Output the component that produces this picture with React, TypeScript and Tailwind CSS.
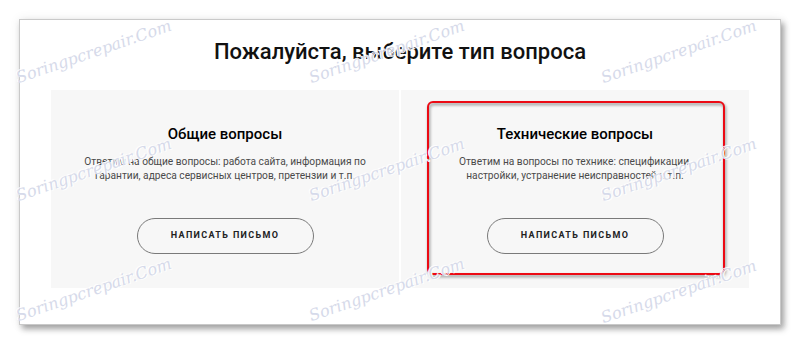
const marks = [
  { left: 20, top: 68 },
  { left: 313, top: 68 },
  { left: 605, top: 68 },
  { left: 20, top: 186 },
  { left: 313, top: 186 },
  { left: 605, top: 186 },
  { left: 20, top: 306 },
  { left: 313, top: 306 },
  { left: 605, top: 308 },
]

const cards = [
  {
    title: 'Общие вопросы',
    text: ['Ответим на общие вопросы: работа сайта, информация по', 'гарантии, адреса сервисных центров, претензии и т.п.'],
    marked: false,
  },
  {
    title: 'Технические вопросы',
    text: ['Ответим на вопросы по технике: спецификации,', 'настройки, устранение неисправностей и т.п.'],
    marked: true,
  },
]

function Card({ title, text, marked }: { title: string; text: string[]; marked: boolean }) {
  return (
    <div className="relative flex flex-col items-center bg-[#f7f7f7] pt-[34px] pb-[34px]">
      <h2 className="text-[15px] leading-[20px] font-medium text-black">{title}</h2>
      <p className="mt-[11px] text-center text-[10.2px] leading-[14px] text-[#4a4a4a]">
        {text[0]}
        <br />
        {text[1]}
      </p>
      <button className="mt-[35px] h-[36px] w-[177px] rounded-full border border-[#7a7a7a] text-[9px] font-bold tracking-[0.15em] text-[#222]">
        НАПИСАТЬ ПИСЬМО
      </button>
      {marked && (
        <div className="absolute left-[26px] top-[11px] h-[174px] w-[298px] rounded-[6px] border-2 border-[#ec0a14] drop-shadow-[1px_2px_1.5px_rgba(0,0,0,0.45)]" />
      )}
    </div>
  )
}

export default function App() {
  return (
    <div className="relative h-[344px] w-[800px] overflow-hidden bg-white font-['Roboto',sans-serif]">
      <div className="ml-[19px] mt-[19px] h-[306px] w-[762px] border border-[#c9c9c9] bg-white shadow-[3px_4px_6px_rgba(0,0,0,0.35),0_0_10px_rgba(0,0,0,0.08)]">
        <h1 className="pt-[17px] text-center text-[22px] leading-[30px] font-medium text-[#111]">
          Пожалуйста, выберите тип вопроса
        </h1>
        <div className="mx-[31px] mt-[23px] grid grid-cols-2 gap-[2px]">
          {cards.map((c) => (
            <Card key={c.title} {...c} />
          ))}
        </div>
      </div>

      {/* watermark */}
      {marks.map((m, i) => (
        <span
          key={i}
          className="pointer-events-none absolute origin-bottom-left -rotate-[19deg] whitespace-nowrap font-['DejaVu_Serif',serif] text-[16px] leading-[20px] italic text-[#d6daea] [text-shadow:1px_1px_0_#fff,-1px_-1px_0_#fff]"
          style={{ left: m.left, top: m.top }}
        >
          Soringpcrepair.Com
        </span>
      ))}
    </div>
  )
}
